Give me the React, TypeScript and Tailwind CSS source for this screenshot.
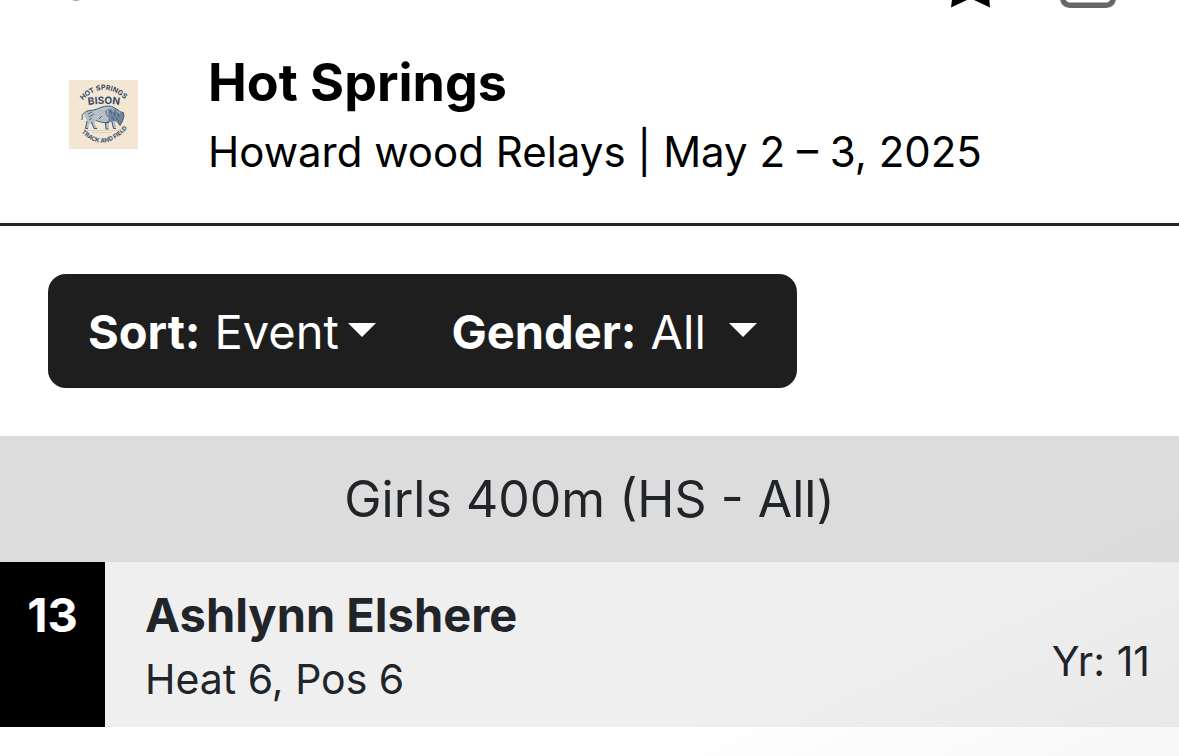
import type { ReactNode } from "react";

function TopBar() {
  return (
    <nav className="flex h-2 items-end overflow-hidden pl-[70px] pr-[63px]" aria-label="Page actions">
      <button type="button" aria-label="Back" className="h-2 w-3">
        <svg viewBox="0 0 12 8" className="h-2 w-3">
          <path d="M2 0 Q6 1.8 10 0 Z" fill="#a3a3a3" />
        </svg>
      </button>
      <div className="ml-auto flex gap-[69px]">
        <button type="button" aria-label="Favorite" className="h-2 w-10">
          <svg viewBox="0 0 40 8" className="h-2 w-10">
            <path d="M1.2 -2 L0 7.6 L16 0 L20 -2 L23 0 L39 7.6 L38.2 -2 Z" fill="#000" />
          </svg>
        </button>
        <button type="button" aria-label="Window" className="h-2 w-14">
          <svg viewBox="0 0 56 8" className="h-2 w-14">
            <rect x="2.75" y="-40" width="50.5" height="45.25" rx="7" fill="none" stroke="#666" strokeWidth="5.5" />
          </svg>
        </button>
      </div>
    </nav>
  );
}

function TeamLogo() {
  return (
    <svg viewBox="0 0 69 69" className="size-[69px] shrink-0" role="img" aria-label="Team logo">
      <rect width="69" height="69" fill="#f3e7d3" />
      <defs>
        <path id="logo-top" d="M12 22 Q34.5 -2 57.5 21" />
        <path id="logo-name" d="M17 25.5 Q34.5 22 53 25.5" />
        <path id="logo-bottom" d="M9.5 49 Q34 78 61 45" />
      </defs>
      <g fill="#344b69" fontFamily="Inter, 'Liberation Sans', sans-serif" fontWeight="700" textAnchor="middle">
        <text fontSize="7">
          <textPath href="#logo-top" startOffset="50%">HOT SPRINGS</textPath>
        </text>
        <text fontSize="10">
          <textPath href="#logo-name" startOffset="50%">BISON</textPath>
        </text>
        <text fontSize="6">
          <textPath href="#logo-bottom" startOffset="50%">TRACK AND FIELD</textPath>
        </text>
      </g>
      <path
        d="M15.5 33 C17 30.5 21 30.5 25 30 C30 28.5 34 26 39 26 C44 26 47 29 50 30.5 L54 32 L55 36 L53.5 41 L51 45.5 L48.5 42 L46 41 L47 48.5 H44.5 L43 42 L40 42.5 L39.5 49 H37 L36 43 C33 42 30 41 27.5 40 L25.5 43 L28 48.5 H25 L22.5 43 L20 44 L19.5 48.5 H16.5 L18 41 L16 37 Z"
        fill="#b4c0c4"
      />
      <path
        d="M36 31 C39 28 44 28 47 29.5 L54 32 L55 36 L53.5 41 L51 45.5 L48.5 42 L45 41 L42 42 L38 42 L40 38 L37 35 Z"
        fill="#70869a"
      />
      <path
        d="M15.5 33 Q12 34 13.5 38 L12.5 40 M15.5 33 C17 30.5 21 30.5 25 30 C30 28.5 34 26 39 26 C44 26 47 29 50 30.5 M54 32 L55 36 L53.5 41 L51 45.5 L48.5 42 M27 40.5 C31 42 34 43 40 42.5 M18 41 L16.5 48.5 H19 M22.5 42 L25 48.5 H28 M36.5 43 L37 49 H39.5 M43 42 L44.5 48.5 H47"
        fill="none"
        stroke="#3e5877"
        strokeWidth="1"
      />
      <path
        d="M19 34 L23 32 M20 37 L25 34 M20 40 L23 38 M30 39 L33 36 M41 30 L43 34 M45 31 L46 36 M43 37 L45 40 M49 34 L50 37 M47 38 L50 41"
        fill="none"
        stroke="#3e5877"
        strokeWidth="0.9"
      />
      <path d="M38 29 L39 35 M43 29 L45 32 M48 31 L51 33" fill="none" stroke="#d2d3cc" strokeWidth="0.8" />
      <path d="M17 50.5 H51 M23 52.5 H43" stroke="#d6cdbb" strokeWidth="0.8" />
    </svg>
  );
}

function Filter({ id, label, width, children }: { id: string; label: string; width: string; children: ReactNode }) {
  return (
    <div className="flex items-center gap-[14px]">
      <label htmlFor={id} className="font-bold">
        {label}
      </label>
      <div className={`relative ${width}`}>
        <select id={id} className="w-full cursor-pointer appearance-none bg-transparent font-normal text-white">
          {children}
        </select>
        <svg viewBox="0 0 28 14" className="pointer-events-none absolute right-0 top-[19px] h-[14px] w-7">
          <path d="M0 0 H28 L14 14 Z" fill="#fff" />
        </svg>
      </div>
    </div>
  );
}

export default function App() {
  return (
    <div className="relative min-h-screen bg-white font-[Inter,'Liberation_Sans',sans-serif] text-[#212429]">
      <TopBar />

      <header className="flex items-center gap-[70px] border-b-3 border-[#262626] pb-10 pl-[69px] pt-[38px] text-black">
        <TeamLogo />
        <div>
          <h1 className="text-[52px] font-bold leading-[74px]">Hot Springs</h1>
          <p className="text-[42px] leading-[63px]">Howard wood Relays | May 2 – 3, 2025</p>
        </div>
      </header>

      <main>
        <form className="m-12 flex w-fit items-center gap-[76px] rounded-[18px] bg-[#1e1e1e] px-10 pb-7 pt-[30px] text-[47px] leading-[56px] text-white">
          <Filter id="sort" label="Sort:" width="w-[161px]">
            <option>Event</option>
            <option>Name</option>
          </Filter>
          <Filter id="gender" label="Gender:" width="w-[106px]">
            <option>All</option>
            <option>Girls</option>
            <option>Boys</option>
          </Filter>
        </form>

        <section>
          <h2 className="bg-[#dcdcdc] py-7 text-center text-[50px] leading-[70px]">Girls 400m (HS - All)</h2>
          <article className="flex bg-[#efefef]">
            <div className="w-[105px] bg-black pt-6 text-center text-[47px] font-bold leading-[58px] text-white">13</div>
            <div className="flex flex-1 items-center justify-between pb-3 pl-10 pr-[29px] pt-6">
              <div>
                <h3 className="text-[47px] font-bold leading-[58px]">Ashlynn Elshere</h3>
                <p className="text-[41px] leading-[71px]">Heat 6, Pos 6</p>
              </div>
              <p className="pt-5 text-[41px] leading-[60px]">Yr: 11</p>
            </div>
          </article>
        </section>
      </main>

      <div className="pointer-events-none absolute bottom-0 right-0 h-[260px] w-1/2 bg-linear-to-br from-transparent from-50% to-black/3" />
    </div>
  );
}
